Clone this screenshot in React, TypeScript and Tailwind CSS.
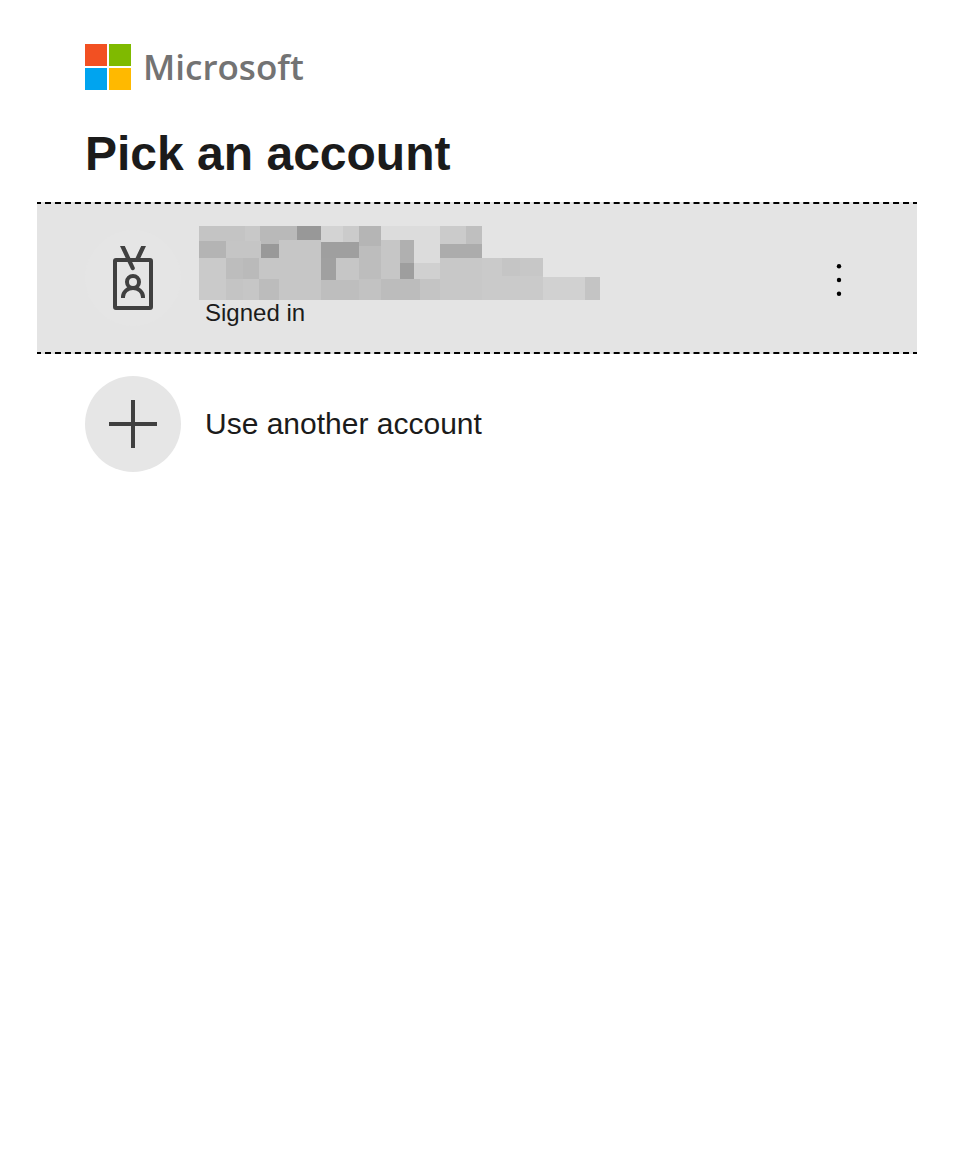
type Tile = [x: number, y: number, width: number, height: number, fill: string];

const tiles: Tile[] = [
  [0, 0, 46, 15, "#c4c4c4"],
  [46, 0, 15, 15, "#c8c8c8"],
  [61, 0, 37, 18, "#b9b9b9"],
  [98, 0, 24, 14, "#989898"],
  [122, 0, 22, 16, "#d3d3d3"],
  [144, 0, 16, 16, "#cbcbcb"],
  [160, 0, 22, 20, "#b5b5b5"],
  [182, 0, 59, 37, "#dcdcdc"],
  [241, 0, 26, 18, "#cbcbcb"],
  [267, 0, 16, 18, "#bfbfbf"],
  [0, 15, 27, 17, "#b4b4b4"],
  [27, 15, 35, 17, "#c5c5c5"],
  [62, 18, 18, 14, "#999999"],
  [80, 14, 42, 60, "#c6c6c6"],
  [122, 16, 38, 16, "#9f9f9f"],
  [160, 20, 22, 33, "#bdbdbd"],
  [182, 14, 19, 39, "#c6c6c6"],
  [201, 14, 14, 23, "#b0b0b0"],
  [241, 18, 42, 14, "#acacac"],
  [0, 32, 27, 42, "#cacaca"],
  [27, 32, 17, 21, "#bdbdbd"],
  [44, 32, 16, 21, "#bababa"],
  [60, 32, 20, 21, "#c6c6c6"],
  [122, 32, 15, 22, "#a0a0a0"],
  [137, 32, 23, 22, "#c6c6c6"],
  [201, 37, 14, 16, "#9e9e9e"],
  [215, 37, 26, 16, "#d0d0d0"],
  [241, 32, 42, 42, "#c8c8c8"],
  [283, 32, 61, 42, "#cacaca"],
  [303, 32, 18, 18, "#c5c5c5"],
  [321, 32, 23, 18, "#c7c7c7"],
  [27, 53, 17, 21, "#c4c4c4"],
  [44, 53, 16, 21, "#c6c6c6"],
  [60, 53, 20, 21, "#bcbcbc"],
  [122, 54, 38, 20, "#bebebe"],
  [160, 53, 22, 21, "#c2c2c2"],
  [182, 53, 39, 21, "#bcbcbc"],
  [221, 53, 20, 21, "#c4c4c4"],
  [344, 51, 42, 23, "#d1d1d1"],
  [386, 51, 15, 23, "#c4c4c4"],
];

const Logo = () => {
  return (
    <div className="flex items-center gap-3">
      <svg width="46" height="46" viewBox="0 0 46 46" aria-hidden="true">
        <rect width="22" height="22" fill="#f25022" />
        <rect x="24" width="22" height="22" fill="#7fba00" />
        <rect y="24" width="22" height="22" fill="#00a4ef" />
        <rect x="24" y="24" width="22" height="22" fill="#ffb900" />
      </svg>
      <span className="font-['Open_Sans','Noto_Sans',sans-serif] text-[35px] leading-[46px] font-semibold text-[#737373]">
        Microsoft
      </span>
    </div>
  );
};

const BadgeIcon = () => {
  return (
    <svg
      className="size-24 shrink-0 rounded-full bg-[#e5e5e5]"
      viewBox="0 0 96 96"
      fill="none"
      stroke="#404040"
      strokeWidth="4"
      aria-hidden="true"
    >
      <rect x="30" y="30" width="36" height="48" rx="1" />
      <path
        d="M35 16h4.8L49.6 37.2a2 2 0 0 1-3.7 1.8zM56.2 16H61L54.4 30H49.6z"
        fill="#404040"
        stroke="none"
      />
      <circle cx="48" cy="52" r="6" />
      <path d="M38 68v-1a10 9 0 0 1 20 0v1" />
    </svg>
  );
};

const PlusIcon = () => {
  return (
    <svg
      className="size-24 shrink-0 rounded-full bg-[#e6e6e6]"
      viewBox="0 0 96 96"
      stroke="#404040"
      strokeWidth="4"
      aria-hidden="true"
    >
      <path d="M24 48H72M48 24V72" />
    </svg>
  );
};

const HiddenName = () => {
  return (
    <svg
      className="-ml-1.5"
      width="401"
      height="74"
      viewBox="0 0 401 74"
      shapeRendering="crispEdges"
      aria-hidden="true"
    >
      {tiles.map(([x, y, width, height, fill]) => (
        <rect
          key={`${x}-${y}`}
          x={x}
          y={y}
          width={width}
          height={height}
          fill={fill}
        />
      ))}
    </svg>
  );
};

const App = () => {
  return (
    <main className="min-h-screen bg-white pt-11 pr-[39px] pl-[37px] font-['Liberation_Sans',Arial,sans-serif] text-[#1b1b1b]">
      <header className="px-12">
        <Logo />
        <h1 className="mt-9 text-5xl leading-14 font-bold">Pick an account</h1>
      </header>

      <ul className="mt-5">
        <li className="overflow-hidden">
          <div className="-mx-0.5 flex items-stretch border-y-2 border-dashed border-black bg-[#e4e4e4]">
            <button
              type="button"
              className="flex min-w-0 grow cursor-pointer items-start gap-6 pt-[22px] pb-[26px] pl-[50px] text-left"
            >
              <span className="mt-1">
                <BadgeIcon />
              </span>
              <span className="flex flex-col">
                <HiddenName />
                <span className="text-2xl leading-[26px]">Signed in</span>
              </span>
            </button>
            <button
              type="button"
              aria-label="Open menu"
              className="mr-12 flex w-16 shrink-0 cursor-pointer items-center justify-center"
            >
              <svg width="32" height="40" viewBox="0 0 32 40" aria-hidden="true">
                <circle cx="16" cy="8.2" r="2.2" />
                <circle cx="16" cy="22" r="2.2" />
                <circle cx="16" cy="35.8" r="2.2" />
              </svg>
            </button>
          </div>
        </li>
        <li>
          <button
            type="button"
            className="flex w-full cursor-pointer items-center gap-6 px-12 py-[22px] text-left text-3xl"
          >
            <PlusIcon />
            <span>Use another account</span>
          </button>
        </li>
      </ul>
    </main>
  );
};

export default App;
